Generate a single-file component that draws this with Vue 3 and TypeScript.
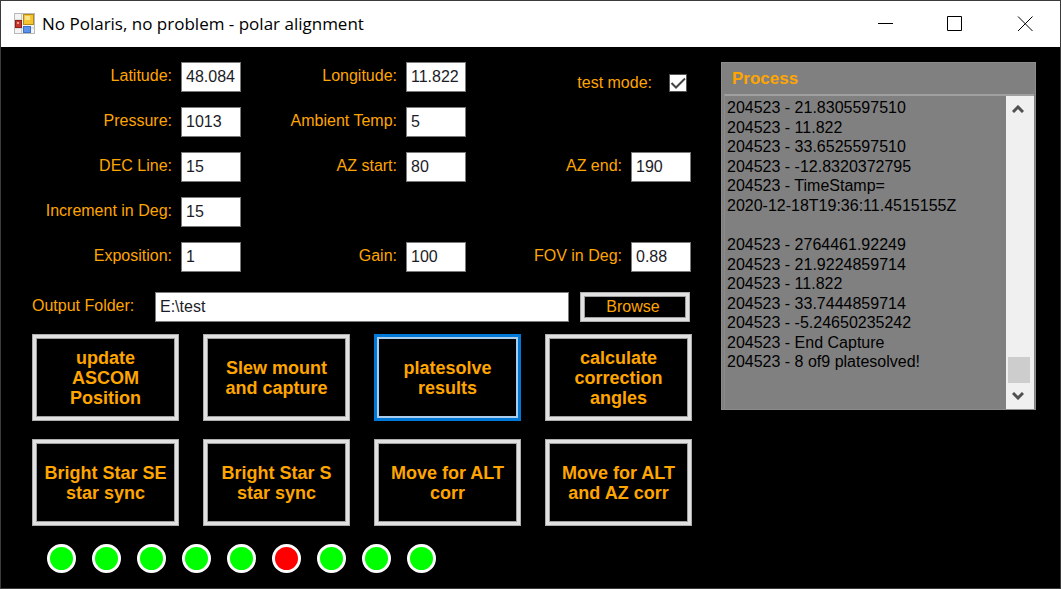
<script setup lang="ts">
import { ref } from 'vue'

interface Field {
  id: string
  label: string
  value: string
  row: number
  col: number
}

interface Action {
  text: string
  active?: boolean
}

const fields = ref<Field[]>([
  { id: 'latitude', label: 'Latitude:', value: '48.084', row: 1, col: 1 },
  { id: 'longitude', label: 'Longitude:', value: '11.822', row: 1, col: 2 },
  { id: 'pressure', label: 'Pressure:', value: '1013', row: 2, col: 1 },
  { id: 'ambient', label: 'Ambient Temp:', value: '5', row: 2, col: 2 },
  { id: 'dec', label: 'DEC Line:', value: '15', row: 3, col: 1 },
  { id: 'az-start', label: 'AZ start:', value: '80', row: 3, col: 2 },
  { id: 'az-end', label: 'AZ end:', value: '190', row: 3, col: 3 },
  { id: 'increment', label: 'Increment in Deg:', value: '15', row: 4, col: 1 },
  { id: 'exposition', label: 'Exposition:', value: '1', row: 5, col: 1 },
  { id: 'gain', label: 'Gain:', value: '100', row: 5, col: 2 },
  { id: 'fov', label: 'FOV in Deg:', value: '0.88', row: 5, col: 3 },
])

const testMode = ref(true)
const folder = ref('E:\\test')

const actions: Action[] = [
  { text: 'update\nASCOM\nPosition' },
  { text: 'Slew mount\nand capture' },
  { text: 'platesolve\nresults', active: true },
  { text: 'calculate\ncorrection\nangles' },
  { text: 'Bright Star SE\nstar sync' },
  { text: 'Bright Star S\nstar sync' },
  { text: 'Move for ALT\ncorr' },
  { text: 'Move for ALT\nand AZ corr' },
]

const solved: boolean[] = [true, true, true, true, true, false, true, true, true]

const log: string[] = [
  '204523 - 21.8305597510',
  '204523 - 11.822',
  '204523 - 33.6525597510',
  '204523 - -12.8320372795',
  '204523 - TimeStamp=',
  '2020-12-18T19:36:11.4515155Z',
  '',
  '204523 - 2764461.92249',
  '204523 - 21.9224859714',
  '204523 - 11.822',
  '204523 - 33.7444859714',
  '204523 - -5.24650235242',
  '204523 - End Capture',
  '204523 - 8 of9 platesolved!',
]
</script>

<template>
  <div class="window">
    <header class="titlebar">
      <svg class="app-icon" viewBox="0 0 22 22" aria-hidden="true">
        <rect x="0.5" y="0.5" width="20" height="20" fill="#f4f4f4" stroke="#b9b9b9" />
        <path d="M1 7H8M7.5 1V20M1 15H20" stroke="#c9c9c9" fill="none" />
        <rect x="9.5" y="1.5" width="10" height="10" fill="#f5c431" stroke="#b58a1c" />
        <rect x="11" y="3" width="5" height="4" fill="#fbe389" />
        <rect x="1.5" y="7.5" width="6" height="7" fill="#c5352c" stroke="#8f2019" />
        <rect x="3" y="9" width="2" height="2" fill="#ea9a92" />
        <rect x="9.5" y="13.5" width="7" height="6" fill="#5b93ea" stroke="#3d6fc4" />
      </svg>
      <h1 class="title">No Polaris, no problem - polar alignment</h1>
      <div class="controls">
        <button type="button" aria-label="Minimize">
          <svg viewBox="0 0 16 16"><path d="M1 7.5H16" /></svg>
        </button>
        <button type="button" aria-label="Maximize">
          <svg viewBox="0 0 16 16"><path d="M0.5 0.5H14.5V14.5H0.5Z" /></svg>
        </button>
        <button type="button" aria-label="Close">
          <svg viewBox="0 0 16 16"><path d="M1 0.5L15.5 15M15.5 0.5L1 15" /></svg>
        </button>
      </div>
    </header>

    <main class="client">
      <form class="form" @submit.prevent>
        <div class="fields">
          <div
            v-for="f in fields"
            :key="f.id"
            class="field"
            :class="[`row-${f.row}`, `col-${f.col}`]"
          >
            <label :for="f.id">{{ f.label }}</label>
            <input :id="f.id" v-model="f.value" class="box" type="text" />
          </div>
          <div class="field check row-1 col-3">
            <label for="test-mode">test mode:</label>
            <span class="tick">
              <input id="test-mode" v-model="testMode" type="checkbox" />
              <svg v-if="testMode" viewBox="0 0 18 18" aria-hidden="true">
                <path d="M2.5 9L7 13.5L16 4.5" />
              </svg>
            </span>
          </div>
        </div>

        <div class="folder">
          <label for="folder">Output Folder:</label>
          <input id="folder" v-model="folder" class="box" type="text" />
          <button type="button" class="framed browse">Browse</button>
        </div>

        <div class="actions">
          <button
            v-for="a in actions"
            :key="a.text"
            type="button"
            class="framed action"
            :class="{ active: a.active }"
          >{{ a.text }}</button>
        </div>

        <div class="lights">
          <span v-for="(ok, i) in solved" :key="i" class="light" :class="{ failed: !ok }"></span>
        </div>
      </form>

      <section class="process">
        <h2>Process</h2>
        <div class="output">
          <ol class="log" role="log" aria-label="Process">
            <li v-for="(line, i) in log" :key="i">{{ line }}</li>
          </ol>
          <div class="scrollbar">
            <button type="button" aria-label="Scroll up">
              <svg viewBox="0 0 12 8"><path d="M1 7L6 2L11 7" /></svg>
            </button>
            <div class="track"><div class="thumb"></div></div>
            <button type="button" aria-label="Scroll down">
              <svg viewBox="0 0 12 8"><path d="M1 1L6 6L11 1" /></svg>
            </button>
          </div>
        </div>
      </section>
    </main>
  </div>
</template>

<style>
body {
  margin: 0;
  background: #000;
}
</style>

<style scoped>
* {
  box-sizing: border-box;
}

.window {
  min-height: 100vh;
  display: flex;
  flex-direction: column;
  border: 1px solid #3b3b3b;
  background: #000;
  color: #ffa500;
  font: 16px/20px "Liberation Sans", Arial, sans-serif;
}

button,
input {
  margin: 0;
  font: inherit;
}

.titlebar {
  display: flex;
  align-items: center;
  height: 46px;
  padding-left: 13px;
  background: #fff;
  color: #000;
}

.app-icon {
  width: 22px;
  height: 22px;
}

.title {
  flex: 1;
  margin: 0 0 0 6px;
  font: 400 17px/24px "Open Sans", "Noto Sans", sans-serif;
  white-space: nowrap;
}

.controls {
  display: flex;
}

.controls button {
  display: flex;
  align-items: center;
  justify-content: center;
  width: 70px;
  height: 46px;
  padding: 0;
  border: 0;
  background: none;
}

.controls svg {
  width: 16px;
  height: 16px;
  fill: none;
  stroke: #000;
}

.client {
  display: grid;
  grid-template-columns: minmax(0, 44fr) minmax(0, 21fr);
  column-gap: 29px;
  align-items: start;
  padding: 15px 24px 15px 31px;
}

.fields {
  display: grid;
  grid-template-columns: 209fr 225fr 225fr;
  grid-auto-rows: 30px;
  row-gap: 15px;
  padding-right: 1px;
}

.field {
  display: flex;
  align-items: center;
  justify-content: flex-end;
  gap: 9px;
  white-space: nowrap;
}

label {
  padding-bottom: 2px;
}

.row-1 { grid-row: 1; }
.row-2 { grid-row: 2; }
.row-3 { grid-row: 3; }
.row-4 { grid-row: 4; }
.row-5 { grid-row: 5; }
.col-1 { grid-column: 1; }
.col-2 { grid-column: 2; }
.col-3 { grid-column: 3; }

.box {
  width: 60px;
  height: 30px;
  padding: 0 4px;
  border: 1px solid #7a7a7a;
  border-radius: 0;
  background: #fff;
  color: #1c1c28;
}

.check {
  align-self: end;
  gap: 17px;
  height: 18px;
  padding-right: 4px;
}

.check label {
  padding-bottom: 0;
}

.tick {
  display: grid;
  width: 18px;
  height: 18px;
}

.tick input {
  grid-area: 1 / 1;
  appearance: none;
  width: 18px;
  height: 18px;
  border: 1px solid #555;
  background: #fff;
}

.tick svg {
  grid-area: 1 / 1;
  width: 18px;
  height: 18px;
  fill: none;
  stroke: #444;
  stroke-width: 2;
  pointer-events: none;
}

.folder {
  display: flex;
  align-items: center;
  margin-top: 20px;
  padding-right: 2px;
}

.folder label {
  width: 123px;
}

.folder .box {
  flex: 1;
  min-width: 0;
}

.framed {
  padding: 0;
  border: 1px solid #adadad;
  border-radius: 0;
  background: #000;
  box-shadow: inset 0 0 0 3px #e1e1e1, inset 0 0 0 4px #a0a0a0;
  color: #ffa500;
}

.browse {
  width: 110px;
  height: 30px;
  padding-right: 4px;
  margin-left: 11px;
}

.actions {
  display: grid;
  grid-template-columns: repeat(4, minmax(0, 1fr));
  gap: 18px 24px;
  margin-top: 12px;
}

.action {
  height: 87px;
  font-size: 18px;
  font-weight: 700;
  line-height: 20px;
  white-space: pre-line;
}

.action.active {
  border-color: #0078d7;
  box-shadow: inset 0 0 0 2px #0078d7, inset 0 0 0 4px #a9cdea;
}

.lights {
  display: flex;
  gap: 16px;
  margin: 18px 0 0 15px;
}

.light {
  width: 29px;
  height: 29px;
  border: 3px solid #fff;
  border-radius: 50%;
  background: #0f0;
}

.light.failed {
  background: #f00;
}

.process {
  display: flex;
  flex-direction: column;
  height: 348px;
  border: 1px solid #8c8c8c;
  background: #808080;
}

.process h2 {
  margin: 0;
  padding: 6px 10px 5px;
  font-size: 17px;
  line-height: 20px;
}

.output {
  flex: 1;
  display: flex;
  margin: 0 1px 0 2px;
  border-top: 2px solid #a0a0a0;
  border-left: 1px solid #8c8c8c;
}

.log {
  flex: 1;
  display: grid;
  grid-auto-rows: minmax(0, 1fr);
  height: 274px;
  margin: 2px 0 0;
  padding: 0 2px;
  list-style: none;
  color: #000;
  white-space: nowrap;
}

.scrollbar {
  display: flex;
  flex-direction: column;
  width: 28px;
  background: #f0f0f0;
}

.scrollbar button {
  display: flex;
  align-items: center;
  justify-content: center;
  height: 26px;
  padding: 0 4px 0 0;
  border: 0;
  background: none;
}

.scrollbar svg {
  width: 12px;
  height: 8px;
  fill: none;
  stroke: #505050;
  stroke-width: 3;
}

.track {
  flex: 1;
  display: flex;
  flex-direction: column;
  justify-content: flex-end;
  padding: 0 4px 0 2px;
}

.thumb {
  height: 26px;
  background: #cdcdcd;
}
</style>
